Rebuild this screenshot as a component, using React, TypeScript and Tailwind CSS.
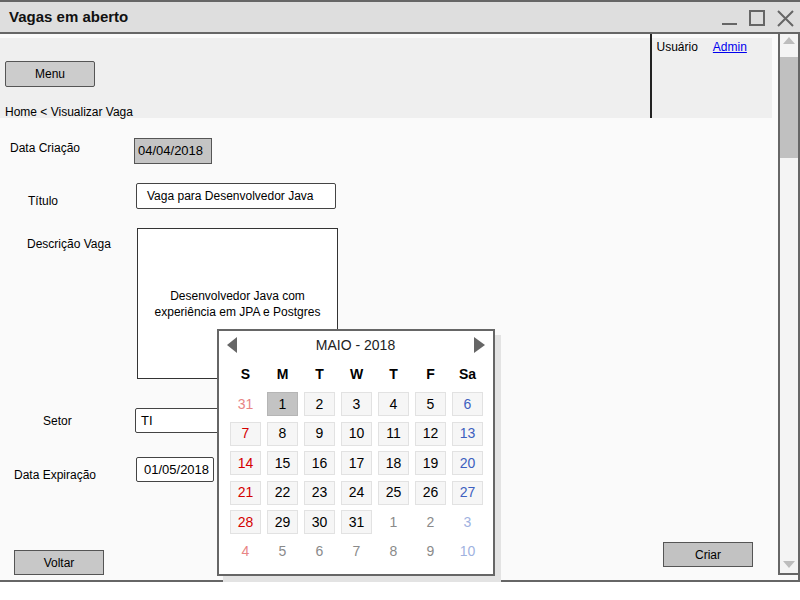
import React from "react";

type Kind = "prev" | "cur" | "next";
interface Day {
  n: number;
  kind: Kind;
}

const weeks: Day[][] = [
  [{ n: 31, kind: "prev" }, ...[1, 2, 3, 4, 5, 6].map((n) => ({ n, kind: "cur" as Kind }))],
  [7, 8, 9, 10, 11, 12, 13].map((n) => ({ n, kind: "cur" as Kind })),
  [14, 15, 16, 17, 18, 19, 20].map((n) => ({ n, kind: "cur" as Kind })),
  [21, 22, 23, 24, 25, 26, 27].map((n) => ({ n, kind: "cur" as Kind })),
  [
    ...[28, 29, 30, 31].map((n) => ({ n, kind: "cur" as Kind })),
    ...[1, 2, 3].map((n) => ({ n, kind: "next" as Kind })),
  ],
  [4, 5, 6, 7, 8, 9, 10].map((n) => ({ n, kind: "next" as Kind })),
];

const dayColor = (d: Day, col: number) => {
  if (d.kind === "cur") {
    if (col === 0) return "text-[#d40000]";
    if (col === 6) return "text-[#3d5fbf]";
    return "text-black";
  }
  if (col === 0) return "text-[#e88585]";
  if (col === 6) return "text-[#9fb2df]";
  return "text-[#8a8a8a]";
};

const Calendar: React.FC = () => {
  return (
    <div className="absolute left-[217px] top-[329px] w-[278px] h-[247px] bg-white border-2 border-[#666] shadow-[6px_6px_0_#e3e3e3] font-['Liberation_Sans',Arial,sans-serif]">
      <div className="flex items-center justify-between px-[8px] mt-[4px] h-[20px]">
        <svg width="10" height="16" viewBox="0 0 10 16">
          <polygon points="10,0 10,16 0,8" fill="#666" />
        </svg>
        <span className="text-[14px] text-[#222]">MAIO - 2018</span>
        <svg width="11" height="16" viewBox="0 0 11 16">
          <polygon points="0,0 0,16 11,8" fill="#666" />
        </svg>
      </div>
      <div className="grid grid-cols-[repeat(7,31px)] gap-x-[6px] ml-[11px] mt-[9px] h-[20px] items-center">
        {["S", "M", "T", "W", "T", "F", "Sa"].map((h, i) => (
          <div key={i} className="text-center text-[14px] font-bold text-black">
            {h}
          </div>
        ))}
      </div>
      <div className="grid grid-cols-[repeat(7,31px)] gap-x-[6px] gap-y-[5.6px] ml-[11px] mt-[8px]">
        {weeks.map((w, r) =>
          w.map((d, c) => {
            const selected = d.kind === "cur" && d.n === 1;
            const cell =
              d.kind === "cur"
                ? selected
                  ? "bg-[#c3c3c3] border-[#b5b5b5]"
                  : "bg-[#f6f6f6] border-[#e2e2e2]"
                : "border-transparent";
            return (
              <div
                key={`${r}-${c}`}
                className={`h-[24px] flex items-center justify-center border text-[14px] ${cell} ${dayColor(d, c)}`}
              >
                {d.n}
              </div>
            );
          })
        )}
      </div>
    </div>
  );
};

const App: React.FC = () => {
  return (
    <div className="relative w-[800px] h-[600px] bg-white overflow-hidden font-['Liberation_Sans',Arial,sans-serif] text-[12px] text-black">
      <div className="h-[582px] border-t-2 border-b-2 border-[#666] flex flex-col">
        {/* title bar */}
        <div className="h-[32px] shrink-0 bg-[#dedede] border-b-2 border-[#666] flex items-center pl-[9px] pr-[6px]">
          <span className="text-[15px] font-bold text-[#111]">Vagas em aberto</span>
          <div className="ml-auto flex items-center gap-[12px] pt-[2px]">
            <svg width="15" height="16" viewBox="0 0 15 16">
              <rect x="0" y="13" width="15" height="2" fill="#666" />
            </svg>
            <svg width="16" height="16" viewBox="0 0 16 16">
              <rect x="1" y="1" width="14" height="14" fill="none" stroke="#666" strokeWidth="2" />
            </svg>
            <svg width="17" height="17" viewBox="0 0 17 17">
              <path d="M1 1 L16 16 M16 1 L1 16" stroke="#666" strokeWidth="2" />
            </svg>
          </div>
        </div>

        <div className="flex flex-1 min-h-0">
          {/* main area */}
          <div className="flex-1 bg-[#fafafa] flex flex-col">
            <div className="h-[84px] flex pr-[6px] shrink-0">
              <div className="w-[650px] pt-[4px]">
                <div className="h-full bg-[#efefef] flex flex-col items-start pl-[5px]">
                  <button className="mt-[23px] shrink-0 w-[90px] h-[26px] bg-[#cccccc] border-[1.5px] border-[#555] rounded-[2px] text-[12px]">
                    Menu
                  </button>
                  <div className="mt-[17px] shrink-0 leading-[16px] whitespace-nowrap">Home &lt; Visualizar Vaga</div>
                </div>
              </div>
              <div className="w-[1.5px] bg-[#222]" />
              <div className="flex-1 pt-[4px]">
                <div className="h-full bg-[#efefef] pl-[5px] pt-[1px] leading-[16px]">
                  <span>Usuário</span>
                  <span className="ml-[15px] text-[#0000ee] underline">Admin</span>
                </div>
              </div>
            </div>

            {/* form */}
            <div className="flex flex-col">
              <div className="flex mt-[20px]">
                <div className="w-[134px] pl-[10px] pt-[2px] leading-[16px]">Data Criação</div>
                <div className="w-[78px] h-[26px] bg-[#c4c4c4] border-[1.5px] border-[#555] flex items-center pl-[3px] text-[13px]">
                  04/04/2018
                </div>
              </div>
              <div className="flex mt-[19px]">
                <div className="w-[136px] pl-[28px] pt-[10px] leading-[16px]">Título</div>
                <div className="w-[200px] h-[26px] bg-white border-[1.5px] border-[#444] rounded-[2px] flex items-center pl-[10px]">
                  Vaga para Desenvolvedor Java
                </div>
              </div>
              <div className="flex mt-[19px]">
                <div className="w-[137px] pl-[27px] pt-[8px] leading-[16px]">Descrição Vaga</div>
                <div className="w-[201px] h-[151px] bg-white border-[1.5px] border-[#333] flex items-center justify-center text-center leading-[16px]">
                  Desenvolvedor Java com
                  <br />
                  experiência em JPA e Postgres
                </div>
              </div>
              <div className="flex mt-[29px]">
                <div className="w-[135px] pl-[43px] pt-[5px] leading-[16px]">Setor</div>
                <div className="w-[200px] h-[25px] bg-white border-[1.5px] border-[#444] rounded-[2px] flex items-center pl-[5px] text-[13px]">
                  TI
                </div>
              </div>
              <div className="flex mt-[24px]">
                <div className="w-[136px] pl-[14px] pt-[10px] leading-[16px]">Data Expiração</div>
                <div className="w-[78px] h-[25px] bg-white border-[1.5px] border-[#444] rounded-[2px] flex items-center pl-[7px] text-[13px]">
                  01/05/2018
                </div>
              </div>
              <div className="flex items-start mt-[59px]">
                <button className="ml-[14px] mt-[8px] w-[90px] h-[25px] bg-[#c8c8c8] border-[1.5px] border-[#555] text-[12px]">
                  Voltar
                </button>
                <button className="ml-auto mr-[25px] w-[90px] h-[25px] bg-[#c2c2c2] border-[1.5px] border-[#555] text-[12px]">
                  Criar
                </button>
              </div>
            </div>
          </div>

          {/* scrollbar */}
          <div className="w-[22px] border-r-2 border-[#666] bg-[#fafafa] flex flex-col">
            <div className="h-[541px] border-l-2 border-b-2 border-[#666] bg-[#f4f4f4] flex flex-col">
              <div className="h-[23px] flex justify-center pt-[3px]">
                <svg width="12" height="7" viewBox="0 0 12 7">
                  <polygon points="6,0 12,7 0,7" fill="#bdbdbd" />
                </svg>
              </div>
              <div className="h-[101px] bg-[#c0c0c0]" />
              <div className="flex-1" />
              <div className="h-[12px] flex justify-center">
                <svg width="12" height="7" viewBox="0 0 12 7">
                  <polygon points="0,0 12,0 6,7" fill="#bdbdbd" />
                </svg>
              </div>
            </div>
          </div>
        </div>
      </div>

      <Calendar />
    </div>
  );
};

export default App;
